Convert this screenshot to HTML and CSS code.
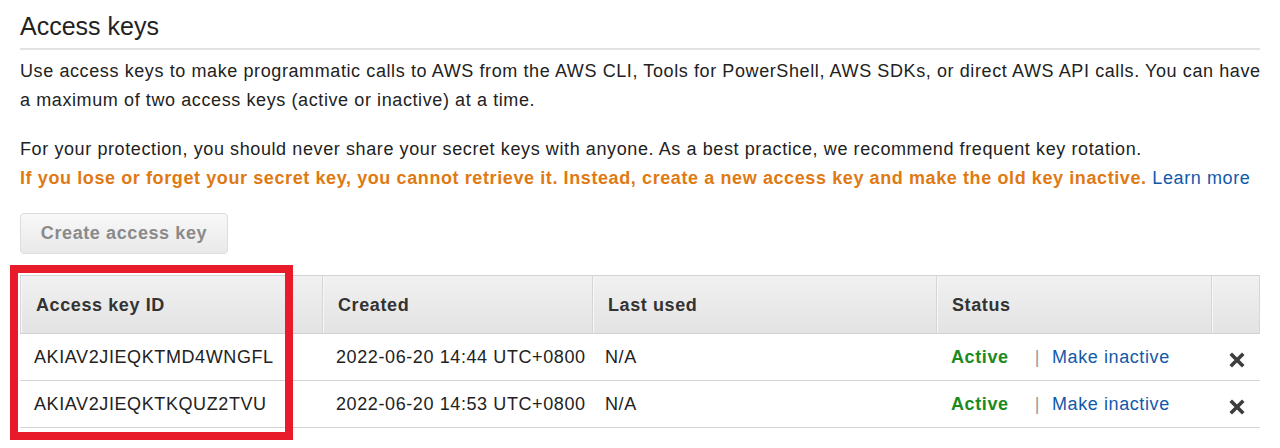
FILE: index.html
```html
<!DOCTYPE html>
<html lang="en">
<head>
<meta charset="utf-8">
<title>Access keys</title>
<link rel="stylesheet" href="styles.css">
</head>
<body>
<div class="page">
  <h1 class="title">Access keys</h1>
  <p class="intro">Use access keys to make programmatic calls to AWS from the AWS CLI, Tools for PowerShell, AWS SDKs, or direct AWS API calls. You can have<br>a maximum of two access keys (active or inactive) at a time.</p>
  <p class="warning">For your protection, you should never share your secret keys with anyone. As a best practice, we recommend frequent key rotation.<br><strong class="alert">If you lose or forget your secret key, you cannot retrieve it. Instead, create a new access key and make the old key inactive.</strong> <a class="link" href="#">Learn more</a></p>
  <button class="btn" type="button" disabled>Create access key</button>
  <div class="table-wrap">
    <table class="keys">
      <colgroup>
        <col class="c-id"><col class="c-created"><col class="c-used"><col class="c-status"><col class="c-del">
      </colgroup>
      <thead>
        <tr>
          <th class="first">Access key ID</th>
          <th>Created</th>
          <th>Last used</th>
          <th>Status</th>
          <th class="last"></th>
        </tr>
      </thead>
      <tbody>
        <tr>
          <td class="id">AKIAV2JIEQKTMD4WNGFL</td>
          <td>2022-06-20 14:44 UTC+0800</td>
          <td class="used">N/A</td>
          <td class="status"><span class="active">Active</span><span class="sep">|</span><a class="link" href="#">Make inactive</a></td>
          <td class="del"><svg class="x" viewBox="0 0 16 16" width="16" height="16" aria-hidden="true"><path d="M3 3L13 13M13 3L3 13" stroke="#3d3d3d" stroke-width="3.6" stroke-linecap="square" fill="none"/></svg></td>
        </tr>
        <tr>
          <td class="id">AKIAV2JIEQKTKQUZ2TVU</td>
          <td>2022-06-20 14:53 UTC+0800</td>
          <td class="used">N/A</td>
          <td class="status"><span class="active">Active</span><span class="sep">|</span><a class="link" href="#">Make inactive</a></td>
          <td class="del"><svg class="x" viewBox="0 0 16 16" width="16" height="16" aria-hidden="true"><path d="M3 3L13 13M13 3L3 13" stroke="#3d3d3d" stroke-width="3.6" stroke-linecap="square" fill="none"/></svg></td>
        </tr>
      </tbody>
    </table>
    <div class="highlight"></div>
  </div>
</div>
</body>
</html>
```

FILE: styles.css
```css
html, body {
  margin: 0;
  padding: 0;
  background: #ffffff;
}

body {
  min-height: 448px;
  font-family: "Liberation Sans", Arial, sans-serif;
  font-size: 18px;
  letter-spacing: 0.6px;
  color: #222222;
}

.page {
  width: 1240px;
  padding: 0 20px 20px;
}

.title {
  margin: 11px 0 0;
  padding-bottom: 7px;
  font-size: 25px;
  line-height: 30px;
  font-weight: normal;
  letter-spacing: 0;
  color: #222222;
  border-bottom: 2px solid #e2e2e2;
}

.intro,
.warning {
  margin: 0;
  line-height: 29px;
}

.intro {
  margin-top: 7px;
  white-space: nowrap;
}

.warning {
  margin-top: 20px;
  white-space: nowrap;
}

.alert {
  color: #df7a13;
  font-weight: bold;
}

.link {
  color: #1259ab;
  text-decoration: none;
}

.btn {
  display: block;
  margin-top: 20px;
  width: 208px;
  height: 41px;
  padding: 0;
  font-family: inherit;
  font-size: 18px;
  font-weight: bold;
  letter-spacing: 0.6px;
  color: #8a8a8a;
  background: linear-gradient(to bottom, #f8f8f8, #e9e9e9);
  border: 1px solid #dddddd;
  border-radius: 4px;
}

.table-wrap {
  position: relative;
  margin-top: 21px;
}

.keys {
  width: 1240px;
  table-layout: fixed;
  border-collapse: separate;
  border-spacing: 0;
}

.c-id { width: 302px; }
.c-created { width: 270px; }
.c-used { width: 344px; }
.c-status { width: 275px; }
.c-del { width: 49px; }

.keys th {
  height: 59px;
  padding: 2px 0 0 15px;
  box-sizing: border-box;
  text-align: left;
  font-weight: bold;
  color: #333333;
  background: linear-gradient(to bottom, #f1f1f1, #e3e3e3);
  border-top: 1px solid #d2d2d2;
  border-bottom: 1px solid #d2d2d2;
  border-left: 1px solid #d6d6d6;
  box-shadow: inset 1px 0 0 #f7f7f7;
}

.keys th.last {
  border-right: 1px solid #d6d6d6;
}

.keys td {
  height: 46px;
  padding: 0 0 0 14px;
  border-bottom: 1px solid #d4d4d4;
  color: #222222;
  white-space: nowrap;
  vertical-align: middle;
}

.keys td.used {
  padding-left: 13px;
}

.keys td.status {
  padding-left: 15px;
}

.active {
  color: #1d8a1d;
  font-weight: bold;
}

.sep {
  display: inline-block;
  margin: 0 12px 0 26px;
  color: #999999;
}

.keys td.del {
  padding: 0 0 0 18px;
}

.x {
  display: block;
  margin-top: 6px;
}

.highlight {
  position: absolute;
  left: -10px;
  top: -10px;
  width: 283px;
  height: 175px;
  box-sizing: border-box;
  border: 8px solid #e81b2a;
  pointer-events: none;
}
```
